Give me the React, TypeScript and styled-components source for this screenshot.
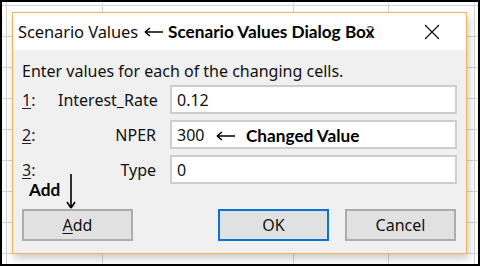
import React from "react";
import styled, { createGlobalStyle } from "styled-components";

const GlobalStyle = createGlobalStyle`
  html, body { margin: 0; padding: 0; background: #fff; }
  * { box-sizing: border-box; }
`;

const UI_FONT = `"Noto Sans", "Open Sans", sans-serif`;
const NOTE_FONT = `Lato, "Liberation Sans", sans-serif`;

// spreadsheet behind the dialog
const Sheet = styled.div`
  position: relative;
  width: 480px;
  height: 266px;
  border: 2px solid #000;
  background-color: #fff;
  background-image:
    linear-gradient(to right, transparent 4px, #d4d4d4 4px, #d4d4d4 5px, transparent 5px),
    linear-gradient(to right, transparent 100px, #d4d4d4 100px, #d4d4d4 101px, transparent 101px),
    linear-gradient(to right, transparent 291px, #d4d4d4 291px, #d4d4d4 292px, transparent 292px),
    linear-gradient(to right, transparent 386px, #d4d4d4 386px, #d4d4d4 387px, transparent 387px),
    linear-gradient(to right, transparent 472px, #d4d4d4 472px, #d4d4d4 473px, transparent 473px),
    repeating-linear-gradient(to bottom, transparent 0, transparent 3px, #d4d4d4 3px, #d4d4d4 4px, transparent 4px, transparent 31px);
  font-family: ${UI_FONT};
`;

const Dialog = styled.div`
  position: absolute;
  left: 10px;
  top: 10px;
  width: 455px;
  height: 242px;
  border: 1px solid #f0b35e;
  background: #f0f0f0;
  box-shadow: 2px 4px 8px rgba(0, 0, 0, 0.22);
  display: flex;
  flex-direction: column;
`;

const TitleBar = styled.div`
  height: 37px;
  background: #fff;
  display: flex;
  align-items: center;
  padding-left: 5px;
  position: relative;
`;

const Title = styled.span`
  font-size: 16.5px;
  color: #101010;
  letter-spacing: -0.1px;
`;

const Help = styled.span`
  position: absolute;
  left: 354px;
  top: 8px;
  font-size: 16px;
  color: #555;
`;

const Close = styled.svg`
  position: absolute;
  right: 26px;
  top: 11px;
`;

const Body = styled.div`
  flex: 1;
  padding: 11px 9px 0 9px;
  display: flex;
  flex-direction: column;
`;

const Prompt = styled.div`
  font-size: 16px;
  line-height: 20px;
  color: #111;
  margin-bottom: 4px;
`;

const Rows = styled.div`
  display: flex;
  flex-direction: column;
  gap: 6px;
`;

const Row = styled.div`
  display: grid;
  grid-template-columns: 36px 112px 1fr;
  align-items: center;
  height: 29px;
  font-size: 16px;
  color: #111;
`;

const Num = styled.span`
  color: #222;
`;

const Key = styled.span`
  text-decoration: underline;
  text-underline-offset: 2px;
`;

const Name = styled.span`
  text-align: right;
  padding-right: 14px;
`;

const Field = styled.div`
  height: 29px;
  background: #fff;
  border: 2px solid #cdcdcd;
  padding-left: 5px;
  display: flex;
  align-items: center;
  font-size: 16px;
  color: #111;
`;

const Buttons = styled.div`
  display: flex;
  margin-top: 25px;
  gap: 16px;
  padding-right: 1px;
`;

const Button = styled.div<{ $primary?: boolean }>`
  width: 111px;
  height: 32px;
  background: #e1e1e1;
  border: 2px solid ${(p) => (p.$primary ? "#0a72d4" : "#adadad")};
  display: flex;
  align-items: center;
  justify-content: center;
  font-size: 16px;
  color: #111;
  &:nth-child(2) { margin-left: auto; }
`;

const Note = styled.div<{ $x: number; $y: number }>`
  position: absolute;
  left: ${(p) => p.$x}px;
  top: ${(p) => p.$y}px;
  display: flex;
  align-items: center;
  gap: 5px;
  font-family: ${NOTE_FONT};
  font-weight: 700;
  font-size: 17.2px;
  color: #000;
  white-space: nowrap;
`;

const LeftArrow = () => (
  <svg width="19" height="10" viewBox="0 0 19 10">
    <path d="M1 5H19M1 5L6 1M1 5L6 9" stroke="#000" strokeWidth="1.6" fill="none" />
  </svg>
);

const DownArrow = styled.svg`
  position: absolute;
  left: 64px;
  top: 172px;
`;

export default function App() {
  return (
    <>
      <GlobalStyle />
      <Sheet>
        <Dialog>
          <TitleBar>
            <Title>Scenario Values</Title>
            <Help>?</Help>
            <Close width="16" height="16" viewBox="0 0 16 16">
              <path d="M1 1L15 15M15 1L1 15" stroke="#111" strokeWidth="1.2" />
            </Close>
          </TitleBar>
          <Body>
            <Prompt>Enter values for each of the changing cells.</Prompt>
            <Rows>
              <Row>
                <Num><Key>1</Key>:</Num>
                <Name>Interest_Rate</Name>
                <Field>0.12</Field>
              </Row>
              <Row>
                <Num><Key>2</Key>:</Num>
                <Name>NPER</Name>
                <Field>300</Field>
              </Row>
              <Row>
                <Num><Key>3</Key>:</Num>
                <Name>Type</Name>
                <Field>0</Field>
              </Row>
            </Rows>
            <Buttons>
              <Button><Key>A</Key>dd</Button>
              <Button $primary>OK</Button>
              <Button>Cancel</Button>
            </Buttons>
          </Body>
        </Dialog>

        <Note $x={142} $y={19}>
          <LeftArrow />
          Scenario Values Dialog Box
        </Note>
        <Note $x={214} $y={123}>
          <LeftArrow />
          <span style={{ marginLeft: 6 }}>Changed Value</span>
        </Note>
        <Note $x={27} $y={177}>Add</Note>
        <DownArrow width="10" height="36" viewBox="0 0 10 36">
          <path d="M5 0V34M5 34L1 28M5 34L9 28" stroke="#000" strokeWidth="1.6" fill="none" />
        </DownArrow>
      </Sheet>
    </>
  );
}
